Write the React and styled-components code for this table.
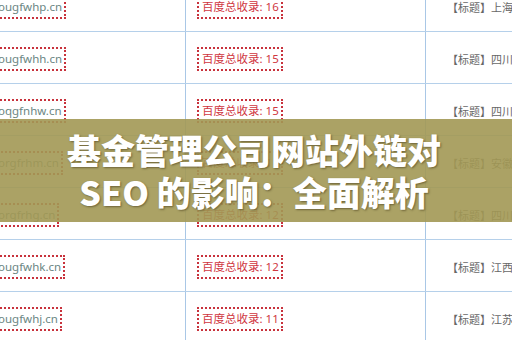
import styled, { createGlobalStyle } from "styled-components";

const GlobalStyle = createGlobalStyle`
  html, body {
    margin: 0;
    padding: 0;
    background: #ffffff;
    overflow: hidden;
  }
  #root {
    width: 512px;
    height: 340px;
  }
`;

const Page = styled.div`
  position: relative;
  width: 512px;
  height: 340px;
  overflow: hidden;
  font-family: "Noto Sans", "Noto Sans CJK SC", sans-serif;
`;

const Table = styled.div`
  margin-top: -20px;
  display: flex;
  flex-direction: column;
`;

const Row = styled.div`
  display: grid;
  grid-template-columns: 186px 240px 1fr;
  height: 52px;
  border-bottom: 1px solid #b5d0ea;
  box-sizing: border-box;
`;

const Cell = styled.div`
  display: flex;
  align-items: center;
  padding-left: ${(p) => p.$pad || 0}px;
  border-right: ${(p) => (p.$last ? "none" : "1px solid #a9c7e6")};
  overflow: hidden;
  white-space: nowrap;
  padding-top: 3px;
`;

const Dotted = styled.span`
  border: 2px dotted #c8323c;
  padding: 3px 2px 3px 3px;
  font-size: ${(p) => p.$size || 11.5}px;
  line-height: 14px;
  color: ${(p) => p.$color};
  margin-left: ${(p) => p.$shift || 0}px;
`;

const Title = styled.span`
  font-size: 11px;
  color: #676767;
`;

const Band = styled.div`
  position: absolute;
  left: 0;
  right: 0;
  top: 119px;
  height: 103px;
  background: rgba(162, 152, 84, 0.9);
  display: flex;
  align-items: center;
  justify-content: center;
`;

const Heading = styled.h1`
  margin: 0;
  width: 410px;
  padding-right: 4px;
  text-align: center;
  font-family: "Noto Sans CJK SC", "Noto Sans", sans-serif;
  font-weight: 900;
  font-size: 34px;
  line-height: 42px;
  color: #ffffff;
  text-shadow: 1px 1px 2px rgba(60, 50, 20, 0.55);
`;

const rows = [
  { domain: "ougfwhp.cn", count: 16, title: "【标题】上海基金" },
  { domain: "ougfwhh.cn", count: 15, title: "【标题】四川基金" },
  { domain: "oqgfnhw.cn", count: 15, title: "【标题】四川基金" },
  { domain: "orgfrhm.cn", count: 11, title: "【标题】安徽基金" },
  { domain: "orgfrhg.cn", count: 12, title: "【标题】四川基金" },
  { domain: "ougfwhk.cn", count: 12, title: "【标题】江西基金" },
  { domain: "ougfwhj.cn", count: 11, title: "【标题】江苏基金" },
];

export default function App() {
  return (
    <Page>
      <GlobalStyle />
      <Table>
        {rows.map((r) => (
          <Row key={r.domain}>
            <Cell>
              <Dotted $color="#6b8683" $shift={-7} $size={11.5}>
                {r.domain}
              </Dotted>
            </Cell>
            <Cell $pad={11}>
              <Dotted $color="#d0373f">百度总收录: {r.count}</Dotted>
            </Cell>
            <Cell $pad={21} $last>
              <Title>{r.title}</Title>
            </Cell>
          </Row>
        ))}
      </Table>
      <Band>
        <Heading>基金管理公司网站外链对 SEO 的影响：全面解析</Heading>
      </Band>
    </Page>
  );
}
